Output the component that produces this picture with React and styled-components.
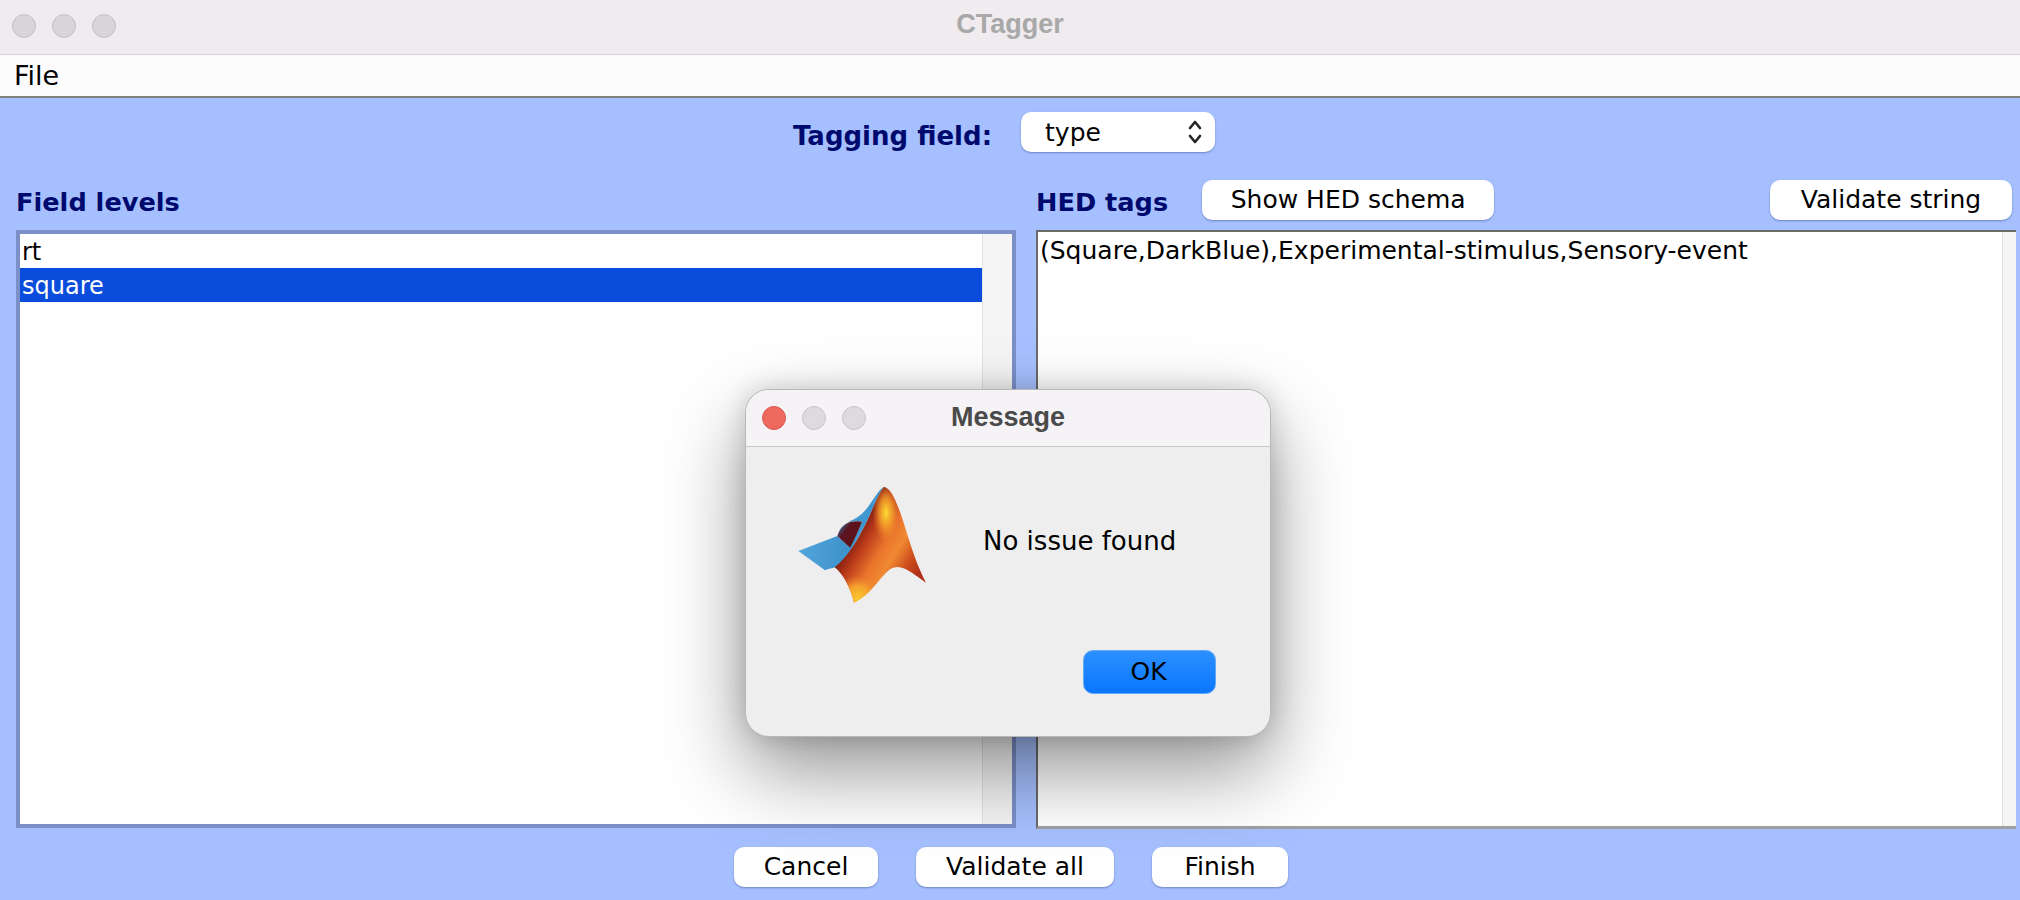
import React from "react";
import styled, { createGlobalStyle } from "styled-components";

const GlobalStyle = createGlobalStyle`
  html, body {
    margin: 0;
    padding: 0;
    overflow: hidden;
    background: #a6c0ff;
  }
`;

const uiFont = `"DejaVu Sans", "Noto Sans", sans-serif`;

const Window = styled.div`
  position: relative;
  width: 2020px;
  height: 900px;
  display: flex;
  flex-direction: column;
  font-family: ${uiFont};
  overflow: hidden;
`;

const TitleBar = styled.div`
  height: 54px;
  flex: none;
  box-sizing: content-box;
  display: grid;
  grid-template-columns: 1fr auto 1fr;
  align-items: center;
  padding: 0 12px;
  background: #efebef;
  border-bottom: 1px solid #d6d4d6;
`;

const Lights = styled.div`
  display: flex;
  gap: 16px;
  margin-bottom: ${(p) => p.$lift || 0}px;
`;

const Light = styled.span`
  width: 24px;
  height: 24px;
  box-sizing: border-box;
  border-radius: 50%;
  background: ${(p) => p.$color || "#d8d4d8"};
  border: 1px solid ${(p) => p.$edge || "#c4c0c4"};
`;

const WindowTitle = styled.div`
  font-family: "Liberation Sans", Arial, sans-serif;
  font-weight: 700;
  font-size: 27px;
  padding-bottom: ${(p) => p.$lift}px;
  color: ${(p) => p.$color || "#a8a8a8"};
`;

const MenuBar = styled.div`
  height: 41px;
  flex: none;
  display: flex;
  align-items: center;
  padding-left: 14px;
  background: #fbfbfb;
  border-bottom: 2px solid #7f7f7f;
  font-size: 27px;
  color: #000;
`;

const Body = styled.div`
  flex: 1;
  display: flex;
  flex-direction: column;
  background: #a6c0ff;
`;

const TaggingRow = styled.div`
  display: flex;
  justify-content: center;
  align-items: center;
  gap: 29px;
  padding: 14px 12px 0 0;
`;

const Label = styled.div`
  font-weight: 700;
  font-size: 26px;
  color: #000a6e;
  white-space: nowrap;
`;

const TaggingLabel = styled(Label)`
  padding-top: 8px;
`;

const Select = styled.div`
  width: 194px;
  height: 40px;
  box-sizing: border-box;
  display: flex;
  align-items: center;
  justify-content: space-between;
  padding: 0 12px 0 24px;
  background: #fff;
  border-radius: 10px;
  box-shadow: 0 1px 2px rgba(40, 60, 120, 0.45);
  font-size: 25px;
  color: #000;
`;

const Panels = styled.div`
  display: grid;
  grid-template-columns: 1000px 980px;
  gap: 20px;
  padding: 28px 4px 0 16px;
`;

const Panel = styled.div`
  display: flex;
  flex-direction: column;
`;

const PanelHeader = styled.div`
  height: 50px;
  box-sizing: border-box;
  display: flex;
  align-items: flex-start;
`;

const PanelLabel = styled(Label)`
  font-size: 25.6px;
  padding-top: 7px;
`;

const Button = styled.div`
  height: 40px;
  box-sizing: border-box;
  width: ${(p) => p.$width}px;
  padding-bottom: 2px;
  display: flex;
  align-items: center;
  justify-content: center;
  background: #fff;
  border-radius: 10px;
  box-shadow: 0 1px 2px rgba(40, 60, 120, 0.45);
  font-size: 25px;
  color: #000;
  white-space: nowrap;
`;

const SchemaButton = styled(Button)`
  margin-left: 34px;
`;

const ValidateButton = styled(Button)`
  margin-left: auto;
  margin-right: 4px;
`;

const Box = styled.div`
  height: ${(p) => p.$height}px;
  box-sizing: border-box;
  display: flex;
  background: #fff;
  border-style: solid;
  border-width: ${(p) => (p.$sunken ? "2px 0 3px 2px" : "4px")};
  border-color: ${(p) => (p.$sunken ? "#6a6a6a #6a6a6a #a0a0a0 #6a6a6a" : "#7b90c9")};
`;

const ListRows = styled.div`
  flex: 1;
  display: flex;
  flex-direction: column;
`;

const ListRow = styled.div`
  height: 34px;
  padding: 1px 0 0 2px;
  box-sizing: border-box;
  display: flex;
  align-items: center;
  font-size: 24px;
  background: ${(p) => (p.$selected ? "#0a4cdb" : "#fff")};
  color: ${(p) => (p.$selected ? "#fff" : "#000")};
`;

const TagText = styled.div`
  flex: 1;
  padding: 4px 0 0 2px;
  font-size: 25px;
  color: #000;
  white-space: nowrap;
`;

const ScrollTrack = styled.div`
  flex: none;
  width: ${(p) => p.$width}px;
  box-sizing: border-box;
  background: #f5f5f5;
  border-left: 1px solid #e3e3e3;
`;

const Footer = styled.div`
  display: flex;
  justify-content: center;
  gap: 38px;
  padding: 18px 0 0 2px;
`;

const Dialog = styled.div`
  position: absolute;
  left: 745px;
  top: 389px;
  width: 526px;
  height: 348px;
  box-sizing: border-box;
  display: flex;
  flex-direction: column;
  background: #eeeeee;
  border: 1px solid #b8b8b8;
  border-radius: 24px;
  box-shadow: 0 34px 80px rgba(0, 0, 0, 0.42), 0 0 24px rgba(0, 0, 0, 0.16);
  overflow: hidden;
`;

const DialogTitleBar = styled.div`
  height: 56px;
  flex: none;
  display: grid;
  grid-template-columns: 1fr auto 1fr;
  align-items: center;
  padding: 0 16px;
  background: #f5f3f6;
  border-bottom: 1px solid #c8c8c8;
`;

const DialogContent = styled.div`
  flex: 1;
  display: grid;
  grid-template-columns: 237px 1fr;
  grid-template-rows: 1fr auto;
  padding: 0 54px 42px 0;
`;

const LogoCell = styled.div`
  padding: 24px 0 0 34px;
`;

const MessageText = styled.div`
  padding-top: 79px;
  font-size: 26px;
  color: #000;
  white-space: nowrap;
`;

const OkButton = styled.div`
  grid-column: 2;
  justify-self: end;
  width: 133px;
  height: 44px;
  box-sizing: border-box;
  padding: 0 2px 2px 0;
  display: flex;
  align-items: center;
  justify-content: center;
  border-radius: 10px;
  border: 1px solid #63a8f5;
  background: linear-gradient(#2b90ff, #0a76ff);
  font-size: 25px;
  color: #000;
`;

const Chevrons = () => (
  <svg width="16" height="26" viewBox="0 0 16 26" fill="none" stroke="#222" strokeWidth="2.6" strokeLinecap="round" strokeLinejoin="round">
    <path d="M3 9 L8 3 L13 9" />
    <path d="M3 17 L8 23 L13 17" />
  </svg>
);

const bodyPath =
  "M312 47 C340 54 360 120 385 200 C403 258 420 300 438 335 C402 312 372 280 340 290 C308 300 282 366 222 395 C210 350 192 312 164 289 C205 255 230 210 254 165 C276 122 292 72 312 47 Z";

const MatlabLogo = () => (
  <svg width="160" height="140" viewBox="0 0 480 420">
    <defs>
      <linearGradient id="peak" x1="235" y1="165" x2="430" y2="285" gradientUnits="userSpaceOnUse">
        <stop offset="0" stopColor="#7a1c10" />
        <stop offset="0.18" stopColor="#b8391a" />
        <stop offset="0.42" stopColor="#ea742c" />
        <stop offset="0.6" stopColor="#f08a32" />
        <stop offset="0.8" stopColor="#d0501f" />
        <stop offset="1" stopColor="#b03018" />
      </linearGradient>
      <radialGradient id="glow" cx="318" cy="125" r="90" gradientUnits="userSpaceOnUse" gradientTransform="translate(318 125) scale(0.45 1) translate(-318 -125)">
        <stop offset="0" stopColor="#fde02f" />
        <stop offset="0.5" stopColor="#f8a52c" stopOpacity="0.75" />
        <stop offset="1" stopColor="#f08030" stopOpacity="0" />
      </radialGradient>
      <radialGradient id="foot" cx="235" cy="385" r="72" gradientUnits="userSpaceOnUse">
        <stop offset="0" stopColor="#fbc82f" />
        <stop offset="0.55" stopColor="#f5a32e" />
        <stop offset="1" stopColor="#ee7a30" stopOpacity="0" />
      </radialGradient>
      <linearGradient id="sheet" x1="60" y1="240" x2="210" y2="260" gradientUnits="userSpaceOnUse">
        <stop offset="0" stopColor="#52a6dc" />
        <stop offset="1" stopColor="#3c8fc8" />
      </linearGradient>
      <linearGradient id="pit" x1="175" y1="165" x2="235" y2="210" gradientUnits="userSpaceOnUse">
        <stop offset="0" stopColor="#2f6f9f" />
        <stop offset="0.35" stopColor="#5c1420" />
        <stop offset="1" stopColor="#5c1116" />
      </linearGradient>
    </defs>
    <path d="M55 240 L172 195 L212 232 L160 289 L135 298 Z" fill="url(#sheet)" />
    <path d="M312 47 C290 58 268 115 238 134 C225 145 212 148 205 152 C225 150 240 150 246 152 C235 180 220 210 205 232 L150 293 L168 288 C205 258 232 205 254 165 C276 122 292 72 312 47 Z" fill="#3f97d2" />
    <path d="M172 195 C180 168 195 158 212 152 C225 150 240 150 246 152 C235 180 222 208 210 230 Z" fill="url(#pit)" />
    <path d={bodyPath} fill="url(#peak)" />
    <path d={bodyPath} fill="url(#glow)" />
    <path d={bodyPath} fill="url(#foot)" />
  </svg>
);

const App = () => {
  return (
    <Window>
      <GlobalStyle />
      <TitleBar>
        <Lights $lift={2}>
          <Light />
          <Light />
          <Light />
        </Lights>
        <WindowTitle $lift={6}>CTagger</WindowTitle>
      </TitleBar>
      <MenuBar>File</MenuBar>
      <Body>
        <TaggingRow>
          <TaggingLabel>Tagging field:</TaggingLabel>
          <Select>
            type
            <Chevrons />
          </Select>
        </TaggingRow>
        <Panels>
          <Panel>
            <PanelHeader>
              <PanelLabel>Field levels</PanelLabel>
            </PanelHeader>
            <Box $height={598}>
              <ListRows>
                <ListRow>rt</ListRow>
                <ListRow $selected>square</ListRow>
              </ListRows>
              <ScrollTrack $width={30} />
            </Box>
          </Panel>
          <Panel>
            <PanelHeader>
              <PanelLabel>HED tags</PanelLabel>
              <SchemaButton $width={292}>Show HED schema</SchemaButton>
              <ValidateButton $width={242}>Validate string</ValidateButton>
            </PanelHeader>
            <Box $sunken $height={599}>
              <TagText>(Square,DarkBlue),Experimental-stimulus,Sensory-event</TagText>
              <ScrollTrack $width={14} />
            </Box>
          </Panel>
        </Panels>
        <Footer>
          <Button $width={144}>Cancel</Button>
          <Button $width={198}>Validate all</Button>
          <Button $width={136}>Finish</Button>
        </Footer>
      </Body>
      <Dialog>
        <DialogTitleBar>
          <Lights>
            <Light $color="#ee6a5f" $edge="#d9584e" />
            <Light $color="#dddbde" $edge="#c6c4c7" />
            <Light $color="#dddbde" $edge="#c6c4c7" />
          </Lights>
          <WindowTitle $color="#4a4a4a" $lift={2}>Message</WindowTitle>
        </DialogTitleBar>
        <DialogContent>
          <LogoCell>
            <MatlabLogo />
          </LogoCell>
          <MessageText>No issue found</MessageText>
          <OkButton>OK</OkButton>
        </DialogContent>
      </Dialog>
    </Window>
  );
};

export default App;
